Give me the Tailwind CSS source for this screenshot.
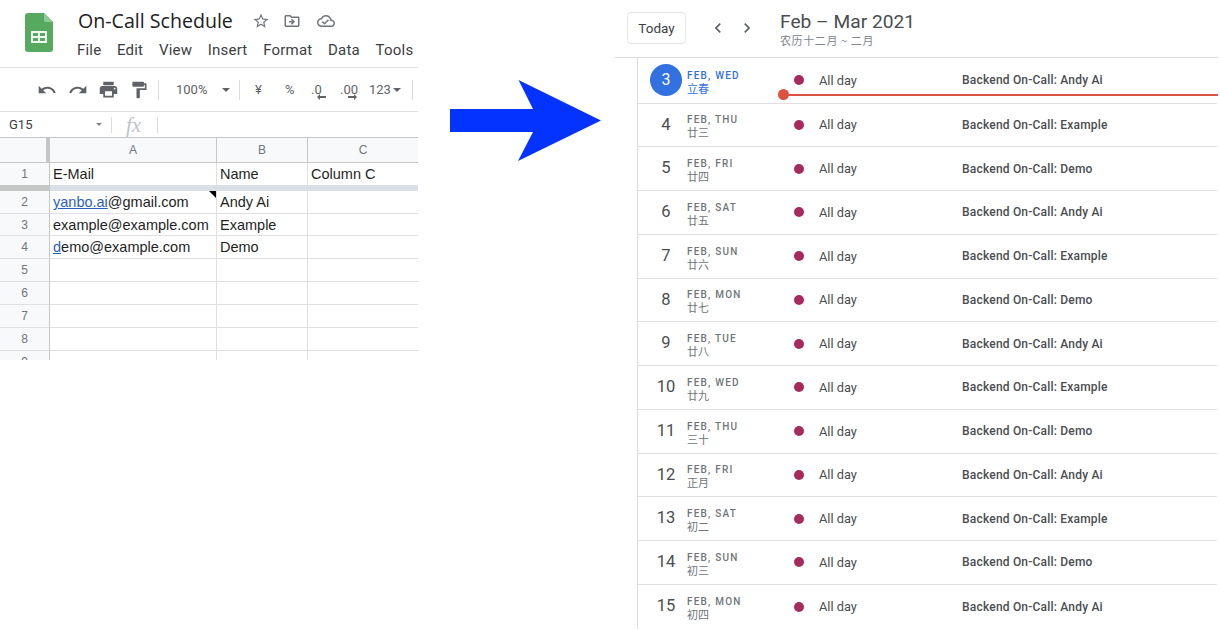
<!DOCTYPE html>
<html lang="en">
<head>
  <meta charset="UTF-8" />
  <title>On-Call Schedule to Calendar</title>
  <script src="https://cdn.jsdelivr.net/npm/@tailwindcss/browser@4"></script>
</head>
<body class="bg-white overflow-hidden">
<div class="flex w-[1220px] h-[630px] overflow-hidden font-['Roboto',sans-serif]">

  <!-- Spreadsheet -->
  <div class="w-[418px] h-[360px] shrink-0 overflow-hidden">
    <div class="flex h-[68px] border-b border-[#e0e0e0]">
      <svg class="ml-[25px] mt-[13px] w-[28px] h-[39px]" viewBox="0 0 28 39">
        <path d="M3 0H19L28 9V36a3 3 0 0 1-3 3H3a3 3 0 0 1-3-3V3a3 3 0 0 1 3-3z" fill="#57a95f"/>
        <path d="M19 0L28 9H21a2 2 0 0 1-2-2z" fill="#8fca95"/>
        <path d="M6 18H22V30H6zM8 20V23H13V20zM15 20V23H20V20zM8 25V28H13V25zM15 25V28H20V25z" fill="#f1f8f1" fill-rule="evenodd"/>
      </svg>
      <div class="ml-[24px]">
        <div class="flex items-center h-[22px] mt-[10px]">
          <span class="pl-px text-[19.6px] leading-[22px] text-[#202124] font-['Open_Sans',sans-serif] w-[170px] whitespace-nowrap">On-Call Schedule</span>
          <svg class="ml-[5px] w-[18px] h-[18px]" viewBox="0 0 24 24" fill="#70757a"><path d="M22 9.24l-7.19-.62L12 2 9.19 8.63 2 9.24l5.46 4.73L5.820 21 12 17.27 18.18 21l-1.63-7.03L22 9.24zM12 15.4l-3.76 2.27 1-4.28-3.32-2.88 4.38-.38L12 6.1l1.71 4.04 4.38.38-3.32 2.88 1 4.28L12 15.4z"/></svg>
          <svg class="ml-[13px] w-[18px] h-[18px]" viewBox="0 0 24 24" fill="#70757a"><path d="M20 6h-8l-2-2H4c-1.1 0-2 .9-2 2v12c0 1.1.9 2 2 2h16c1.1 0 2-.9 2-2V8c0-1.1-.9-2-2-2zm0 12H4V6h5.17l2 2H20v10zm-8.01-9l-1.41 1.41L12.16 12H8v2h4.16l-1.59 1.59L11.99 17 16 13.01 11.99 9z"/></svg>
          <svg class="ml-[16px] w-[18px] h-[18px]" viewBox="0 0 24 24" fill="#70757a"><path d="M19.35 10.04C18.67 6.59 15.64 4 12 4 9.11 4 6.6 5.64 5.35 8.04 2.34 8.36 0 10.91 0 14c0 3.31 2.69 6 6 6h13c2.76 0 5-2.24 5-5 0-2.64-2.05-4.78-4.65-4.96zM19 18H6c-2.21 0-4-1.79-4-4 0-2.05 1.53-3.76 3.56-3.97l1.07-.11.5-.95C8.08 7.14 9.94 6 12 6c2.62 0 4.88 1.86 5.39 4.43l.3 1.5 1.53.11c1.56.1 2.78 1.41 2.78 2.96 0 1.65-1.35 3-3 3zm-9-3.82l-2.09-2.09L6.5 13.5 10 17l6.01-6.01-1.41-1.41z"/></svg>
        </div>
        <div class="flex gap-[15.700px] mt-[8px] text-[15px] leading-[20px] text-[#3c4043] tracking-[0.2px]">
          <span>File</span><span>Edit</span><span>View</span><span>Insert</span><span>Format</span><span>Data</span><span>Tools</span>
        </div>
      </div>
    </div>

    <div class="flex items-center h-[44px] border-b border-[#e0e0e0] text-[#5f6368] text-[13px]">
      <svg class="ml-[37px] w-[20px] h-[20px]" viewBox="0 0 24 24" fill="#5f6368"><path d="M12.5 8c-2.65 0-5.05.99-6.9 2.6L2 7v9h9l-3.62-3.62c1.39-1.16 3.16-1.88 5.12-1.88 3.54 0 6.55 2.31 7.6 5.5l2.37-.78C21.08 11.03 17.15 8 12.5 8z"/></svg>
      <svg class="ml-[11px] w-[20px] h-[20px]" viewBox="0 0 24 24" fill="#5f6368"><path d="M18.4 10.6C16.55 8.99 14.15 8 11.5 8c-4.65 0-8.58 3.03-9.96 7.22L3.9 16c1.05-3.19 4.05-5.5 7.6-5.5 1.95 0 3.73.72 5.12 1.88L13 16h9V7l-3.6 3.6z"/></svg>
      <svg class="ml-[10px] w-[21px] h-[21px]" viewBox="0 0 24 24" fill="#5f6368"><path d="M19 8H5c-1.66 0-3 1.34-3 3v6h4v4h12v-4h4v-6c0-1.66-1.34-3-3-3zm-3 11H8v-5h8v5zm3-7c-.55 0-1-.45-1-1s.45-1 1-1 1 .45 1 1-.45 1-1 1zm-1-9H6v4h12V3z"/></svg>
      <svg class="ml-[10px] w-[20px] h-[20px]" viewBox="0 0 24 24" fill="#5f6368"><path d="M18 4V3c0-.55-.45-1-1-1H5c-.55 0-1 .45-1 1v4c0 .55.45 1 1 1h12c.55 0 1-.45 1-1V6h1v4H9v11c0 .55.45 1 1 1h2c.55 0 1-.45 1-1v-9h8V4h-3z"/></svg>
      <div class="ml-[9px] w-px h-[20px] bg-[#dadce0]"></div>
      <span class="ml-[17px] w-[42px]">100%</span>
      <span class="w-0 h-0 ml-[4px] border-x-[4px] border-x-transparent border-t-[4px] border-t-[#5f6368]"></span>
      <div class="ml-[9px] w-px h-[20px] bg-[#dadce0]"></div>
      <span class="ml-[15px] w-[9px]">¥</span>
      <span class="ml-[21px] w-[12px]">%</span>
      <div class="relative ml-[14px] w-[16px] h-[20px]">
        <span class="leading-[20px]">.0</span>
        <svg class="absolute left-[6px] top-[14px] w-[10px] h-[6px]" viewBox="0 0 10 6" fill="#5f6368"><path d="M0 3L3 0V2H9V4H3V6z"/></svg>
      </div>
      <div class="relative ml-[13px] w-[19px] h-[20px]">
        <span class="leading-[20px]">.00</span>
        <svg class="absolute left-[7px] top-[14px] w-[10px] h-[6px]" viewBox="0 0 10 6" fill="#5f6368"><path d="M10 3L7 0V2H1V4H7V6z"/></svg>
      </div>
      <span class="ml-[10px] w-[23px]">123</span>
      <span class="w-0 h-0 ml-[1px] border-x-[4px] border-x-transparent border-t-[4px] border-t-[#5f6368]"></span>
      <div class="ml-[11px] w-px h-[20px] bg-[#dadce0]"></div>
    </div>

    <div class="flex items-center h-[26px] border-b border-[#c4c7c5] text-[13px] text-[#3c4043]">
      <span class="ml-[9px] w-[87px]">G15</span>
      <span class="w-0 h-0 border-x-[3px] border-x-transparent border-t-[3px] border-t-[#80868b]"></span>
      <div class="ml-[9px] w-px h-[16px] bg-[#dadce0]"></div>
      <span class="ml-[14px] w-[31px] font-['Liberation_Serif',serif] italic text-[21px] text-[#c0c4c8] leading-[24px]">fx</span>
      <div class="w-px h-[16px] bg-[#dadce0]"></div>
    </div>

    <!-- Sheet grid -->
    <div class="grid grid-cols-[50px_167px_91px_110px] grid-rows-[25px_22px_6px_23px_22px_23px_23px_23px_23px_23px_9px] font-['Liberation_Sans',sans-serif] text-[14.5px] text-[#1f1f1f] leading-[22px]">
      <div class="bg-[#f8f9fa] border-r-[4px] border-r-[#c4c7c5] border-b border-b-[#c4c7c5]"></div>
      <div class="bg-[#f8f9fa] border-r border-b border-[#c4c7c5] text-center text-[12px] text-[#70757a] leading-[24px]">A</div>
      <div class="bg-[#f8f9fa] border-r border-b border-[#c4c7c5] text-center text-[12px] text-[#70757a] leading-[24px]">B</div>
      <div class="bg-[#f8f9fa] border-b border-[#c4c7c5] text-center text-[12px] text-[#70757a] leading-[24px]">C</div>

      <div class="bg-[#f8f9fa] border-r border-[#c4c7c5] text-center text-[12px] text-[#70757a]">1</div>
      <div class="border-r border-[#e0e0e0] pl-[3px]">E-Mail</div>
      <div class="border-r border-[#e0e0e0] pl-[3px]">Name</div>
      <div class="pl-[3px] whitespace-nowrap">Column C</div>

      <div class="bg-[#c4c7c5]"></div>
      <div class="col-span-3 bg-[#d9dfe6]"></div>

      <div class="bg-[#f8f9fa] border-r border-b border-r-[#c4c7c5] border-b-[#e0e0e0] text-center text-[12px] text-[#70757a]">2</div>
      <div class="relative border-r border-b border-[#e0e0e0] pl-[3px] whitespace-nowrap"><span class="text-[#2b5fbf] underline">yanbo.ai</span>@gmail.com
        <span class="absolute right-0 top-0 w-0 h-0 border-l-[7px] border-l-transparent border-t-[7px] border-t-black"></span>
      </div>
      <div class="border-r border-b border-[#e0e0e0] pl-[3px]">Andy Ai</div>
      <div class="border-b border-[#e0e0e0]"></div>

      <div class="bg-[#f8f9fa] border-r border-b border-r-[#c4c7c5] border-b-[#e0e0e0] text-center text-[12px] text-[#70757a]">3</div>
      <div class="border-r border-b border-[#e0e0e0] pl-[3px] whitespace-nowrap">example@example.com</div>
      <div class="border-r border-b border-[#e0e0e0] pl-[3px]">Example</div>
      <div class="border-b border-[#e0e0e0]"></div>

      <div class="bg-[#f8f9fa] border-r border-b border-r-[#c4c7c5] border-b-[#e0e0e0] text-center text-[12px] text-[#70757a]">4</div>
      <div class="border-r border-b border-[#e0e0e0] pl-[3px] whitespace-nowrap"><span class="text-[#2b5fbf] underline">d</span>emo@example.com</div>
      <div class="border-r border-b border-[#e0e0e0] pl-[3px]">Demo</div>
      <div class="border-b border-[#e0e0e0]"></div>

      <div class="bg-[#f8f9fa] border-r border-b border-r-[#c4c7c5] border-b-[#e0e0e0] text-center text-[12px] text-[#70757a]">5</div>
      <div class="border-r border-b border-[#e0e0e0]"></div>
      <div class="border-r border-b border-[#e0e0e0]"></div>
      <div class="border-b border-[#e0e0e0]"></div>

      <div class="bg-[#f8f9fa] border-r border-b border-r-[#c4c7c5] border-b-[#e0e0e0] text-center text-[12px] text-[#70757a]">6</div>
      <div class="border-r border-b border-[#e0e0e0]"></div>
      <div class="border-r border-b border-[#e0e0e0]"></div>
      <div class="border-b border-[#e0e0e0]"></div>

      <div class="bg-[#f8f9fa] border-r border-b border-r-[#c4c7c5] border-b-[#e0e0e0] text-center text-[12px] text-[#70757a]">7</div>
      <div class="border-r border-b border-[#e0e0e0]"></div>
      <div class="border-r border-b border-[#e0e0e0]"></div>
      <div class="border-b border-[#e0e0e0]"></div>

      <div class="bg-[#f8f9fa] border-r border-b border-r-[#c4c7c5] border-b-[#e0e0e0] text-center text-[12px] text-[#70757a]">8</div>
      <div class="border-r border-b border-[#e0e0e0]"></div>
      <div class="border-r border-b border-[#e0e0e0]"></div>
      <div class="border-b border-[#e0e0e0]"></div>

      <div class="bg-[#f8f9fa] border-r border-r-[#c4c7c5] text-center text-[12px] text-[#70757a] overflow-hidden">9</div>
      <div class="border-r border-[#e0e0e0]"></div>
      <div class="border-r border-[#e0e0e0]"></div>
      <div></div>
    </div>
  </div>

  <!-- Arrow -->
  <svg class="ml-[32px] mt-[80px] w-[151px] h-[82px] shrink-0" viewBox="0 0 151 82" fill="#0433ff"><path d="M0 29H83L68.500 0L151 40.500L68 81L83 52H0z"/></svg>

  <!-- Calendar agenda -->
  <div class="ml-[14px] w-[603px] shrink-0">
    <div class="flex h-[58px] border-b border-[#dadce0]">
      <div class="ml-[12px] mt-[12px] w-[59px] h-[32px] border border-[#e6e6e6] rounded-[4px] text-[13.5px] leading-[30px] text-center text-[#3c4043]">Today</div>
      <svg class="ml-[22px] mt-[18px] w-[20px] h-[20px]" viewBox="0 0 24 24" fill="#5f6368"><path d="M15.41 7.41L14 6l-6 6 6 6 1.41-1.41L10.830 12z"/></svg>
      <svg class="ml-[9px] mt-[18px] w-[20px] h-[20px]" viewBox="0 0 24 24" fill="#5f6368"><path d="M10 6L8.590 7.410 13.170 12l-4.580 4.590L10 18l6-6z"/></svg>
      <div class="ml-[23px] mt-[10px]">
        <div class="text-[19.2px] leading-[23px] text-[#4a4d51] whitespace-nowrap">Feb – Mar 2021</div>
        <div class="text-[11px] leading-[14px] text-[#80868b] tracking-[0.6px] font-['Noto_Sans_CJK_SC','Roboto',sans-serif] whitespace-nowrap">农历十二月 ~ 二月</div>
      </div>
    </div>

    <div class="relative ml-[22px] w-[580px] border-l border-[#dadce0] text-[#4a4d51]">
      <!-- Now indicator -->
      <div class="absolute left-[140px] top-[31px] w-[440px] h-[11px] z-10 flex items-center">
        <span class="w-[11px] h-[11px] rounded-full bg-[#db5240] shrink-0"></span>
        <span class="flex-1 h-[2px] -ml-px bg-[#db5240]"></span>
      </div>

      <div class="flex items-center h-[45.500px] border-b border-[#e0e0e0]">
        <div class="ml-[12px] w-[32px] h-[32px] rounded-full bg-[#3271e0] text-white text-[16px] leading-[32px] text-center">3</div>
        <div class="ml-[5px] w-[94px] pt-[3px]">
          <div class="text-[10px] leading-[13px] font-medium tracking-[1.2px] text-[#3271e0]">FEB, WED</div>
          <div class="text-[11px] leading-[13px] font-['Noto_Sans_CJK_SC',sans-serif] text-[#3271e0]">立春</div>
        </div>
        <span class="ml-[13px] w-[10px] h-[10px] rounded-full bg-[#a72a5c]"></span>
        <span class="ml-[15px] w-[143px] text-[12.800px]">All day</span>
        <span class="text-[12px] font-medium tracking-[0.2px]">Backend On-Call: Andy Ai</span>
      </div>

      <div class="flex items-center h-[43.750px] border-b border-[#e0e0e0]">
        <div class="ml-[12px] w-[32px] text-[16.500px] text-center">4</div>
        <div class="ml-[5px] w-[94px] pt-[3px]">
          <div class="text-[10px] leading-[13px] font-medium tracking-[1.2px] text-[#70757a]">FEB, THU</div>
          <div class="text-[11px] leading-[13px] font-['Noto_Sans_CJK_SC',sans-serif] text-[#70757a]">廿三</div>
        </div>
        <span class="ml-[13px] w-[10px] h-[10px] rounded-full bg-[#a72a5c]"></span>
        <span class="ml-[15px] w-[143px] text-[12.800px]">All day</span>
        <span class="text-[12px] font-medium tracking-[0.2px]">Backend On-Call: Example</span>
      </div>

      <div class="flex items-center h-[43.750px] border-b border-[#e0e0e0]">
        <div class="ml-[12px] w-[32px] text-[16.500px] text-center">5</div>
        <div class="ml-[5px] w-[94px] pt-[3px]">
          <div class="text-[10px] leading-[13px] font-medium tracking-[1.2px] text-[#70757a]">FEB, FRI</div>
          <div class="text-[11px] leading-[13px] font-['Noto_Sans_CJK_SC',sans-serif] text-[#70757a]">廿四</div>
        </div>
        <span class="ml-[13px] w-[10px] h-[10px] rounded-full bg-[#a72a5c]"></span>
        <span class="ml-[15px] w-[143px] text-[12.800px]">All day</span>
        <span class="text-[12px] font-medium tracking-[0.2px]">Backend On-Call: Demo</span>
      </div>

      <div class="flex items-center h-[43.750px] border-b border-[#e0e0e0]">
        <div class="ml-[12px] w-[32px] text-[16.500px] text-center">6</div>
        <div class="ml-[5px] w-[94px] pt-[3px]">
          <div class="text-[10px] leading-[13px] font-medium tracking-[1.2px] text-[#70757a]">FEB, SAT</div>
          <div class="text-[11px] leading-[13px] font-['Noto_Sans_CJK_SC',sans-serif] text-[#70757a]">廿五</div>
        </div>
        <span class="ml-[13px] w-[10px] h-[10px] rounded-full bg-[#a72a5c]"></span>
        <span class="ml-[15px] w-[143px] text-[12.800px]">All day</span>
        <span class="text-[12px] font-medium tracking-[0.2px]">Backend On-Call: Andy Ai</span>
      </div>

      <div class="flex items-center h-[43.750px] border-b border-[#e0e0e0]">
        <div class="ml-[12px] w-[32px] text-[16.500px] text-center">7</div>
        <div class="ml-[5px] w-[94px] pt-[3px]">
          <div class="text-[10px] leading-[13px] font-medium tracking-[1.2px] text-[#70757a]">FEB, SUN</div>
          <div class="text-[11px] leading-[13px] font-['Noto_Sans_CJK_SC',sans-serif] text-[#70757a]">廿六</div>
        </div>
        <span class="ml-[13px] w-[10px] h-[10px] rounded-full bg-[#a72a5c]"></span>
        <span class="ml-[15px] w-[143px] text-[12.800px]">All day</span>
        <span class="text-[12px] font-medium tracking-[0.2px]">Backend On-Call: Example</span>
      </div>

      <div class="flex items-center h-[43.750px] border-b border-[#e0e0e0]">
        <div class="ml-[12px] w-[32px] text-[16.500px] text-center">8</div>
        <div class="ml-[5px] w-[94px] pt-[3px]">
          <div class="text-[10px] leading-[13px] font-medium tracking-[1.2px] text-[#70757a]">FEB, MON</div>
          <div class="text-[11px] leading-[13px] font-['Noto_Sans_CJK_SC',sans-serif] text-[#70757a]">廿七</div>
        </div>
        <span class="ml-[13px] w-[10px] h-[10px] rounded-full bg-[#a72a5c]"></span>
        <span class="ml-[15px] w-[143px] text-[12.800px]">All day</span>
        <span class="text-[12px] font-medium tracking-[0.2px]">Backend On-Call: Demo</span>
      </div>

      <div class="flex items-center h-[43.750px] border-b border-[#e0e0e0]">
        <div class="ml-[12px] w-[32px] text-[16.500px] text-center">9</div>
        <div class="ml-[5px] w-[94px] pt-[3px]">
          <div class="text-[10px] leading-[13px] font-medium tracking-[1.2px] text-[#70757a]">FEB, TUE</div>
          <div class="text-[11px] leading-[13px] font-['Noto_Sans_CJK_SC',sans-serif] text-[#70757a]">廿八</div>
        </div>
        <span class="ml-[13px] w-[10px] h-[10px] rounded-full bg-[#a72a5c]"></span>
        <span class="ml-[15px] w-[143px] text-[12.800px]">All day</span>
        <span class="text-[12px] font-medium tracking-[0.2px]">Backend On-Call: Andy Ai</span>
      </div>

      <div class="flex items-center h-[43.750px] border-b border-[#e0e0e0]">
        <div class="ml-[12px] w-[32px] text-[16.500px] text-center">10</div>
        <div class="ml-[5px] w-[94px] pt-[3px]">
          <div class="text-[10px] leading-[13px] font-medium tracking-[1.2px] text-[#70757a]">FEB, WED</div>
          <div class="text-[11px] leading-[13px] font-['Noto_Sans_CJK_SC',sans-serif] text-[#70757a]">廿九</div>
        </div>
        <span class="ml-[13px] w-[10px] h-[10px] rounded-full bg-[#a72a5c]"></span>
        <span class="ml-[15px] w-[143px] text-[12.800px]">All day</span>
        <span class="text-[12px] font-medium tracking-[0.2px]">Backend On-Call: Example</span>
      </div>

      <div class="flex items-center h-[43.750px] border-b border-[#e0e0e0]">
        <div class="ml-[12px] w-[32px] text-[16.500px] text-center">11</div>
        <div class="ml-[5px] w-[94px] pt-[3px]">
          <div class="text-[10px] leading-[13px] font-medium tracking-[1.2px] text-[#70757a]">FEB, THU</div>
          <div class="text-[11px] leading-[13px] font-['Noto_Sans_CJK_SC',sans-serif] text-[#70757a]">三十</div>
        </div>
        <span class="ml-[13px] w-[10px] h-[10px] rounded-full bg-[#a72a5c]"></span>
        <span class="ml-[15px] w-[143px] text-[12.800px]">All day</span>
        <span class="text-[12px] font-medium tracking-[0.2px]">Backend On-Call: Demo</span>
      </div>

      <div class="flex items-center h-[43.750px] border-b border-[#e0e0e0]">
        <div class="ml-[12px] w-[32px] text-[16.500px] text-center">12</div>
        <div class="ml-[5px] w-[94px] pt-[3px]">
          <div class="text-[10px] leading-[13px] font-medium tracking-[1.2px] text-[#70757a]">FEB, FRI</div>
          <div class="text-[11px] leading-[13px] font-['Noto_Sans_CJK_SC',sans-serif] text-[#70757a]">正月</div>
        </div>
        <span class="ml-[13px] w-[10px] h-[10px] rounded-full bg-[#a72a5c]"></span>
        <span class="ml-[15px] w-[143px] text-[12.800px]">All day</span>
        <span class="text-[12px] font-medium tracking-[0.2px]">Backend On-Call: Andy Ai</span>
      </div>

      <div class="flex items-center h-[43.750px] border-b border-[#e0e0e0]">
        <div class="ml-[12px] w-[32px] text-[16.500px] text-center">13</div>
        <div class="ml-[5px] w-[94px] pt-[3px]">
          <div class="text-[10px] leading-[13px] font-medium tracking-[1.2px] text-[#70757a]">FEB, SAT</div>
          <div class="text-[11px] leading-[13px] font-['Noto_Sans_CJK_SC',sans-serif] text-[#70757a]">初二</div>
        </div>
        <span class="ml-[13px] w-[10px] h-[10px] rounded-full bg-[#a72a5c]"></span>
        <span class="ml-[15px] w-[143px] text-[12.800px]">All day</span>
        <span class="text-[12px] font-medium tracking-[0.2px]">Backend On-Call: Example</span>
      </div>

      <div class="flex items-center h-[43.750px] border-b border-[#e0e0e0]">
        <div class="ml-[12px] w-[32px] text-[16.500px] text-center">14</div>
        <div class="ml-[5px] w-[94px] pt-[3px]">
          <div class="text-[10px] leading-[13px] font-medium tracking-[1.2px] text-[#70757a]">FEB, SUN</div>
          <div class="text-[11px] leading-[13px] font-['Noto_Sans_CJK_SC',sans-serif] text-[#70757a]">初三</div>
        </div>
        <span class="ml-[13px] w-[10px] h-[10px] rounded-full bg-[#a72a5c]"></span>
        <span class="ml-[15px] w-[143px] text-[12.800px]">All day</span>
        <span class="text-[12px] font-medium tracking-[0.2px]">Backend On-Call: Demo</span>
      </div>

      <div class="flex items-center h-[43.750px]">
        <div class="ml-[12px] w-[32px] text-[16.500px] text-center">15</div>
        <div class="ml-[5px] w-[94px] pt-[3px]">
          <div class="text-[10px] leading-[13px] font-medium tracking-[1.2px] text-[#70757a]">FEB, MON</div>
          <div class="text-[11px] leading-[13px] font-['Noto_Sans_CJK_SC',sans-serif] text-[#70757a]">初四</div>
        </div>
        <span class="ml-[13px] w-[10px] h-[10px] rounded-full bg-[#a72a5c]"></span>
        <span class="ml-[15px] w-[143px] text-[12.800px]">All day</span>
        <span class="text-[12px] font-medium tracking-[0.2px]">Backend On-Call: Andy Ai</span>
      </div>
    </div>
  </div>
</div>
</body>
</html>
